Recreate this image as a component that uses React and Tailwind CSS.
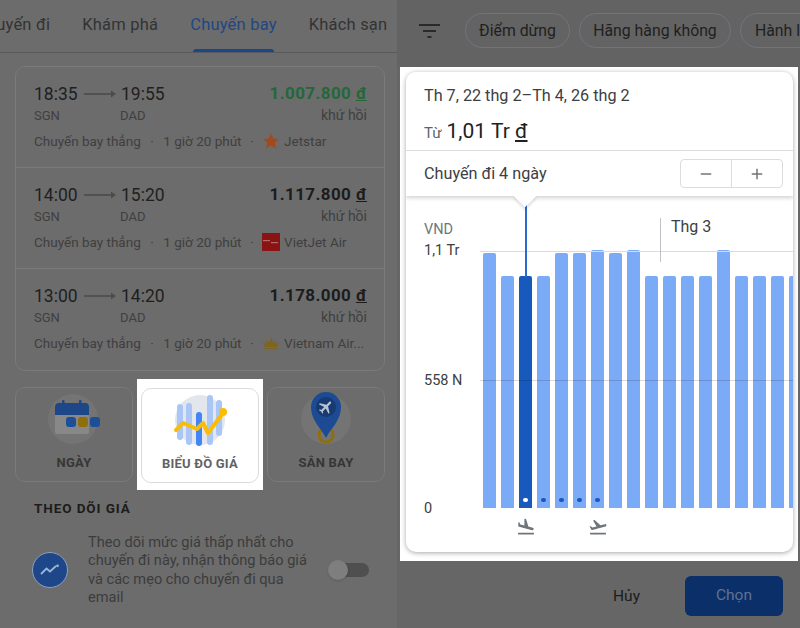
import { MdFlightLand, MdFlightTakeoff, MdAdd, MdRemove } from "react-icons/md";

const flights = [
  { dep: "18:35", arr: "19:55", price: "1.007.800", cheap: true, airline: "Jetstar", logo: "star" },
  { dep: "14:00", arr: "15:20", price: "1.117.800", airline: "VietJet Air", logo: "vietjet" },
  { dep: "13:00", arr: "14:20", price: "1.178.000", airline: "Vietnam Air...", logo: "lotus" },
];

// bar heights in px, measured from the baseline
const bars = [255, 232, 232, 232, 255, 255, 258, 255, 258, 232, 232, 232, 232, 258, 232, 232, 232, 232];

function AirlineLogo({ type }) {
  if (type === "star") {
    return (
      <svg width="18" height="18" viewBox="0 0 18 18" className="shrink-0">
        <polygon points="9,1 11.2,6.6 17.2,7 12.6,10.8 14.1,16.7 9,13.5 3.9,16.7 5.4,10.8 0.8,7 6.8,6.6" fill="#a34a1c" />
      </svg>
    );
  }
  if (type === "vietjet") {
    return (
      <svg width="18" height="18" viewBox="0 0 18 18" className="shrink-0">
        <rect width="18" height="18" fill="#8a1414" />
        <rect x="1" y="7" width="7" height="1.2" fill="#b06a6a" />
        <rect x="9" y="9" width="7" height="1.2" fill="#b06a6a" />
      </svg>
    );
  }
  return (
    <svg width="18" height="18" viewBox="0 0 18 18" className="shrink-0">
      <path d="M9 3 L11 9 L14 5.5 L13.5 10 L17.5 8.5 L14.5 13 L3.5 13 L0.5 8.5 L4.5 10 L4 5.5 L7 9 Z" fill="#7d6420" />
      <rect x="2" y="14" width="14" height="1.2" fill="#7d6420" />
    </svg>
  );
}

function Arrow() {
  return (
    <svg width="32" height="10" viewBox="0 0 32 10" className="shrink-0">
      <path d="M0 5h28" stroke="#4c4c4c" strokeWidth="1.6" />
      <path d="M27 1.5 L32 5 L27 8.5 Z" fill="#4c4c4c" />
    </svg>
  );
}

function FlightRow({ flight, last }) {
  return (
    <div className={`h-[101px] pl-[18px] pr-[17px] pt-[13px] ${last ? "" : "border-b border-[#7a7a7a]"}`}>
      <div className="flex justify-between">
        <div className="grid grid-cols-[86px_auto]">
          <div className="flex items-center gap-[5px] col-span-2 text-[17.5px] leading-[26px] text-[#1f1f1f]">
            <span className="w-[45px]">{flight.dep}</span>
            <Arrow />
            <span>{flight.arr}</span>
          </div>
          <span className="text-[13px] leading-[15px] text-[#3f3f3f]">SGN</span>
          <span className="text-[13px] leading-[15px] text-[#3f3f3f]">DAD</span>
        </div>
        <div className="text-right">
          <div className={`text-[17px] leading-[26px] font-bold tracking-[0.4px] ${flight.cheap ? "text-[#24683a]" : "text-[#1c1c1c]"}`}>
            {flight.price} <span className="underline">đ</span>
          </div>
          <div className="text-[14px] leading-[19px] text-[#3f3f3f]">khứ hồi</div>
        </div>
      </div>
      <div className="flex items-center mt-[6px] h-[20px] text-[13.5px] whitespace-nowrap text-[#3f3f3f]">
        <span>Chuyến bay thẳng</span>
        <span className="mx-[9.5px]">·</span>
        <span>1 giờ 20 phút</span>
        <span className="mx-[8.5px]">·</span>
        <AirlineLogo type={flight.logo} />
        <span className="ml-[4px]">{flight.airline}</span>
      </div>
    </div>
  );
}

function CalendarIcon() {
  return (
    <svg width="60" height="60" viewBox="0 0 60 60">
      <circle cx="29" cy="28" r="25" fill="#747474" />
      <rect x="11" y="13" width="34" height="30" rx="2" fill="#888888" />
      <path d="M11 24v-8a4 4 0 0 1 4-4h26a4 4 0 0 1 4 4v8z" fill="#1d4786" />
      <rect x="18" y="9" width="2.5" height="5" rx="1" fill="#1d4786" />
      <rect x="35" y="9" width="2.5" height="5" rx="1" fill="#1d4786" />
      <rect x="22" y="26" width="10" height="10" rx="3" fill="#1d4f99" />
      <rect x="34" y="26" width="10" height="10" rx="3" fill="#8f6f0c" />
      <rect x="46" y="26" width="10" height="10" rx="3" fill="#1d4f99" />
    </svg>
  );
}

function PriceChartIcon() {
  return (
    <svg width="60" height="60" viewBox="-2 0 60 60">
      <circle cx="28" cy="28" r="25" fill="#e3e6ec" />
      <rect x="5" y="12" width="6" height="36" rx="3" fill="#a9c6f7" />
      <rect x="14" y="11" width="6" height="42" rx="3" fill="#a9c6f7" />
      <rect x="35" y="3" width="6" height="50" rx="3" fill="#a9c6f7" />
      <rect x="44" y="8" width="6" height="36" rx="3" fill="#a9c6f7" />
      <rect x="24" y="20" width="6" height="34" rx="3" fill="#4285f4" />
      <path d="M4 38 L11 31 L25 37 L31 31 L36 41 L51 21" fill="none" stroke="#fbbc04" strokeWidth="4" strokeLinejoin="round" strokeLinecap="round" />
      <circle cx="51" cy="20" r="4" fill="#fbbc04" />
    </svg>
  );
}

function AirportIcon() {
  return (
    <svg width="60" height="60" viewBox="0 0 60 60">
      <circle cx="30" cy="28" r="25" fill="#747474" />
      <circle cx="30" cy="44" r="7" fill="none" stroke="#8f6f0c" strokeWidth="3" />
      <path d="M30 47 C26 38 15 30 15 16 a15 15 0 0 1 30 0 C45 30 34 38 30 47 Z" fill="#1c4b93" />
      <circle cx="30" cy="16" r="10" fill="#173a73" />
      <path transform="rotate(45 30 16) translate(21.5 7.5) scale(0.72)" d="M21 16v-2l-8-5V3.5c0-.83-.67-1.5-1.5-1.5S10 2.67 10 3.5V9l-8 5v2l8-2.5V19l-2 1.5V22l3.5-1 3.5 1v-1.5L13 19v-5.5l8 2.5z" fill="#b9c2d0" />
    </svg>
  );
}

function Tile({ icon, label, active }) {
  return (
    <div className={`w-[118px] h-[95px] shrink-0 rounded-[10px] border flex flex-col items-center ${active ? "border-[#dadce0] bg-white" : "border-[#7a7a7a]"}`}>
      <div className="h-[60px] mt-[3px]">{icon}</div>
      <div className={`text-[13px] font-bold leading-[16px] mt-[4px] tracking-[0.2px] ${active ? "text-[#5f6368]" : "text-[#363636]"}`}>{label}</div>
    </div>
  );
}

function Chip({ children, className = "" }) {
  return (
    <div className={`h-[35px] rounded-full border border-[#717480] flex items-center shrink-0 text-[15.8px] text-[#1f1f1f] ${className}`}>
      {children}
    </div>
  );
}

export default function App() {
  return (
    <div className="w-[800px] h-[628px] overflow-hidden flex bg-[#666666] font-['Roboto',sans-serif]">
      {/* LEFT PHONE */}
      <div className="w-[397px] shrink-0 bg-[#6c6c6c] flex flex-col overflow-hidden">
        <div className="h-[53px] shrink-0 flex gap-[32px] ml-[-24px] border-b border-[#5a5a5a] text-[16.5px] tracking-[0.2px] text-[#333333] whitespace-nowrap">
          <div className="pt-[13px]">Chuyến đi</div>
          <div className="pt-[13px]">Khám phá</div>
          <div className="pt-[13px] relative text-[#1f4784]">
            Chuyến bay
            <div className="absolute left-[3px] right-[3px] bottom-0 h-[3px] rounded-t-[3px] bg-[#1a4788]" />
          </div>
          <div className="pt-[13px]">Khách sạn</div>
        </div>

        {/* FLIGHT LIST */}
        <div className="mt-[13px] ml-[15px] w-[370px] h-[305px] shrink-0 rounded-[10px] border border-[#7a7a7a]">
          {flights.map((f, i) => (
            <FlightRow key={f.dep} flight={f} last={i === flights.length - 1} />
          ))}
        </div>

        {/* TILES */}
        <div className="mt-[8px] ml-[15px] flex items-center gap-[4px]">
          <Tile icon={<CalendarIcon />} label="NGÀY" />
          <div className="bg-white px-[4px] pt-[9px] pb-[7px]">
            <Tile icon={<PriceChartIcon />} label="BIỂU ĐỒ GIÁ" active />
          </div>
          <Tile icon={<AirportIcon />} label="SÂN BAY" />
        </div>

        {/* PRICE TRACKING */}
        <div className="mt-[9px] ml-[34px] text-[13.5px] font-bold tracking-[0.9px] leading-[18px] text-[#1c1c1c]">THEO DÕI GIÁ</div>
        <div className="mt-[16px] ml-[32px] flex items-center">
          <div className="w-[36px] h-[36px] rounded-full border-[1.5px] border-[#8fa0bd] bg-[#1d4788] flex items-center justify-center shrink-0">
            <svg width="20" height="12" viewBox="0 0 20 12">
              <path d="M1 10 L6.500 4.500 L10 7.500 L16 2" fill="none" stroke="#9fb3d6" strokeWidth="1.8" />
              <circle cx="17.5" cy="1.8" r="1.4" fill="#9fb3d6" />
            </svg>
          </div>
          <div className="w-[226px] ml-[20px] text-[14.6px] leading-[18.300px] text-[#3c3c3c]">
            Theo dõi mức giá thấp nhất cho chuyến đi này, nhận thông báo giá và các mẹo cho chuyến đi qua email
          </div>
          <div className="relative w-[41px] h-[20px] ml-[14px] shrink-0">
            <div className="absolute right-0 top-[3px] w-[34px] h-[14px] rounded-full bg-[#4f4f4f]" />
            <div className="absolute left-0 top-0 w-[20px] h-[20px] rounded-full bg-[#7e7e7e] shadow-sm" />
          </div>
        </div>
      </div>

      {/* RIGHT PHONE */}
      <div className="flex-1 flex flex-col min-w-0">
        <div className="h-[67px] shrink-0 bg-[#636363] flex items-start pt-[13px] pl-[22px] gap-[9px] overflow-hidden">
          <svg width="22" height="14" viewBox="0 0 22 14" className="mt-[11px] mr-[15px] shrink-0">
            <path d="M0 1h21M4 7h13M8.500 13h4" stroke="#2a2a2a" strokeWidth="2" />
          </svg>
          <Chip className="w-[105px] justify-center">Điểm dừng</Chip>
          <Chip className="w-[152px] justify-center">Hãng hàng không</Chip>
          <Chip className="w-[120px] pl-[14px] whitespace-nowrap">Hành lý</Chip>
        </div>

        {/* HIGHLIGHTED CHART */}
        <div className="ml-[3px] w-[398px] h-[494px] shrink-0 bg-white pl-[6px] pr-[5px] pt-[5px]">
          <div className="h-[480px] rounded-[10px] bg-white shadow-[0_1px_5px_rgba(0,0,0,0.35)] overflow-hidden flex flex-col">
            <div className="relative z-10 shrink-0 bg-white shadow-[0_2px_4px_rgba(0,0,0,0.18)]">
              <div className="h-[79px] px-[18px] pt-[14px] border-b border-[#dadce0]">
                <div className="text-[16.200px] leading-[20px] text-[#3c4043]">Th 7, 22 thg 2–Th 4, 26 thg 2</div>
                <div className="mt-[12px] flex items-baseline text-[#202124]">
                  <span className="text-[15px] text-[#5f6368] mr-[5px]">Từ</span>
                  <span className="text-[21px] leading-[26px]">1,01 Tr <span className="underline">đ</span></span>
                </div>
              </div>
              <div className="h-[45px] pl-[18px] pr-[10px] flex items-center justify-between">
                <span className="text-[16.200px] mt-[2px] text-[#3c4043]">Chuyến đi 4 ngày</span>
                <div className="flex w-[103px] h-[29px] rounded-[4px] border border-[#dadce0]">
                  <div className="w-[51px] flex items-center justify-center border-r border-[#dadce0] text-[#70757a]"><MdRemove size={18} /></div>
                  <div className="flex-1 flex items-center justify-center text-[#70757a]"><MdAdd size={18} /></div>
                </div>
              </div>
              {/* notch */}
              <div className="absolute left-[111px] bottom-[-8px] w-[16px] h-[16px] rotate-45 bg-white shadow-[2px_2px_3px_rgba(0,0,0,0.12)]" />
            </div>

            {/* CHART */}
            <div className="relative flex-1 flex">
              <div className="w-[77px] shrink-0 pl-[18px] pt-[25px] text-[14.5px] leading-[18px] text-[#3c4043]">
                <div className="text-[#70757a]">VND</div>
                <div className="mt-[3px]">1,1 Tr</div>
                <div className="mt-[112px]">558 N</div>
                <div className="mt-[110px]">0</div>
              </div>
              <div className="pt-[54px] shrink-0">
                <div className="flex items-end gap-[4.67px] h-[258px]">
                  {bars.map((h, i) => (
                    <div
                      key={i}
                      className={`relative w-[13.33px] shrink-0 rounded-t-[2px] ${i === 2 ? "bg-[#185abc]" : "bg-[#7baaf7]"}`}
                      style={{ height: h }}
                    >
                      {i >= 2 && i <= 6 && (
                        <div className={`absolute left-[4.5px] bottom-[6px] rounded-full w-[4.5px] h-[4.5px] ${i === 2 ? "bg-white" : "bg-[#185abc]"}`} />
                      )}
                    </div>
                  ))}
                </div>
                <div className="flex gap-[4.67px] mt-[9px]">
                  {bars.map((_, i) => (
                    <div key={i} className="w-[13.33px] h-[18px] shrink-0 flex justify-center text-[#70757a]">
                      {i === 2 && <MdFlightLand size={20} className="shrink-0" />}
                      {i === 6 && <MdFlightTakeoff size={20} className="shrink-0" />}
                    </div>
                  ))}
                </div>
              </div>

              {/* overlays on the chart */}
              <div className="absolute left-[74px] right-0 top-[55px] h-px bg-[#dadce0]" />
              <div className="absolute left-[74px] right-0 top-[184px] h-px bg-black/15" />
              <div className="absolute left-[119px] top-[8px] w-[1.5px] h-[73px] bg-[#2b6bd0]" />
              <div className="absolute left-[254px] top-[22px] w-px h-[44px] bg-[#bdc1c6]" />
              <div className="absolute left-[265px] top-[21px] text-[16px] leading-[20px] text-[#3c4043]">Thg 3</div>
            </div>
          </div>
        </div>

        {/* ACTIONS */}
        <div className="flex-1 flex items-start justify-end pr-[17px] pt-[15px]">
          <span className="text-[15.5px] leading-[40px] text-[#1c1c1c] mr-[45px]">Hủy</span>
          <div className="w-[98px] h-[40px] rounded-[6px] bg-[#0b2f68] flex items-center justify-center text-[15.5px] text-[#5f7291]">Chọn</div>
        </div>
      </div>
    </div>
  );
}
